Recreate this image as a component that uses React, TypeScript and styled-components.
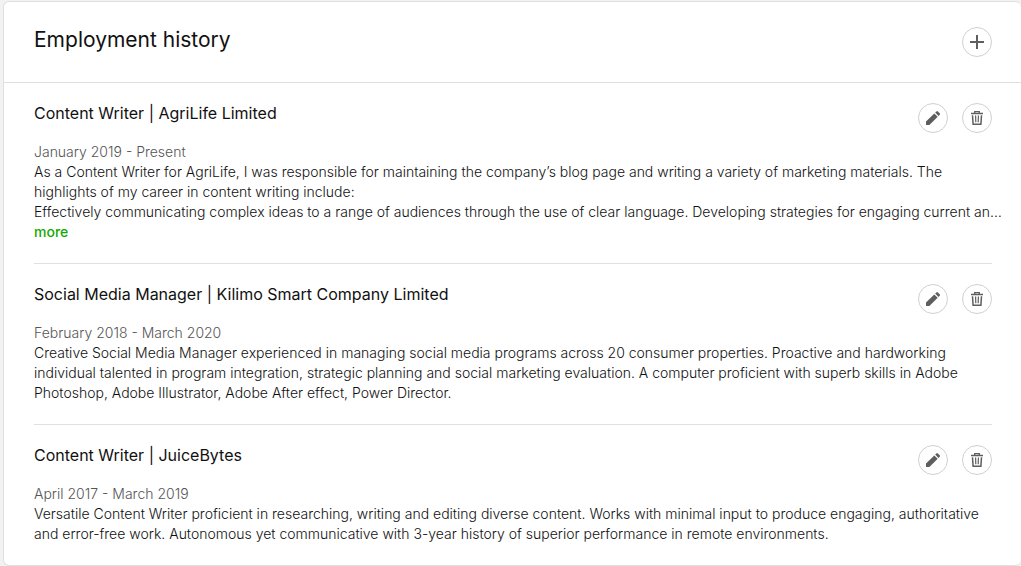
import React from 'react';
import styled, { createGlobalStyle } from 'styled-components';

const GlobalStyle = createGlobalStyle`
  * {
    box-sizing: border-box;
  }
  body {
    margin: 0;
    background: #f2f2f2;
    color: #111;
    font-family: Inter, 'Liberation Sans', sans-serif;
    font-size: 14px;
    font-weight: 300;
    line-height: 20px;
  }
`;

const Page = styled.main`
  padding: 1px 0 0 3px;
`;

const Card = styled.section`
  background: #fff;
  border: 1px solid #e0e0e0;
  border-right-width: 0;
  border-radius: 6px;
`;

const CardHeader = styled.header`
  display: flex;
  align-items: flex-start;
  justify-content: space-between;
  padding: 25px 29px 25px 30px;
  border-bottom: 1px solid #e0e0e0;
`;

const Heading = styled.h2`
  margin: 0;
  font-size: 21px;
  font-weight: 400;
  line-height: 26px;
`;

const JobList = styled.ul`
  list-style: none;
  margin: 0;
  padding: 0 29px 0 30px;
`;

const Job = styled.li`
  padding: 20px 0 21px;

  & + & {
    border-top: 1px solid #e0e0e0;
  }
`;

const JobHeader = styled.div`
  display: flex;
  align-items: flex-start;
  justify-content: space-between;
  margin-bottom: 9px;
`;

const JobTitle = styled.h3`
  margin: 0;
  font-size: 16px;
  font-weight: 400;
  line-height: 20px;
`;

const Actions = styled.div`
  display: flex;
  gap: 14px;
`;

const CircleButton = styled.button`
  display: flex;
  align-items: center;
  justify-content: center;
  width: 30px;
  height: 30px;
  padding: 0;
  background: #fff;
  border: 1px solid #d0d0d0;
  border-radius: 50%;
  color: #5e5e5e;
  cursor: pointer;
`;

const Dates = styled.p`
  margin: 0;
  color: #555;
`;

const Description = styled.p`
  margin: 0;
`;

const ClippedLine = styled(Description)`
  white-space: nowrap;
`;

const MoreLink = styled.a`
  display: inline-block;
  color: #14a800;
  font-weight: 500;
  text-decoration: none;
  vertical-align: top;
`;

const PlusIcon = () => (
  <svg width="14" height="14" viewBox="0 0 14 14" fill="currentColor" aria-hidden="true">
    <path d="M6 0h2v6h6v2H8v6H6V8H0V6h6z" />
  </svg>
);

const PencilIcon = () => (
  <svg width="14" height="14" viewBox="0 0 14 14" fill="currentColor" aria-hidden="true">
    <path d="M0 14v-3.4l8.3-8.2 3.4 3.4L3.4 14z" />
    <path d="M9.2 1.6 10.4.4a1 1 0 0 1 1.4 0l1.9 1.9a1 1 0 0 1 0 1.4l-1.2 1.2z" />
  </svg>
);

const TrashIcon = () => (
  <svg width="14" height="14" viewBox="0 0 14 14" fill="none" stroke="currentColor" aria-hidden="true">
    <path d="M4.7 2V.7h4.6V2" strokeWidth="1.3" />
    <path d="M1 2.5h12" strokeWidth="1.5" />
    <path d="M2.5 4.2l.6 9h7.8l.6-9" strokeWidth="1.5" />
    <path d="M5.6 4.6l.2 6.6M8.4 4.6l-.2 6.6" strokeWidth="1.2" />
  </svg>
);

interface JobData {
  title: string;
  dates: string;
  text: string;
  clipped?: string;
}

const jobs: JobData[] = [
  {
    title: 'Content Writer | AgriLife Limited',
    dates: 'January 2019 - Present',
    text: 'As a Content Writer for AgriLife, I was responsible for maintaining the company’s blog page and writing a variety of marketing materials. The highlights of my career in content writing include:',
    clipped:
      'Effectively communicating complex ideas to a range of audiences through the use of clear language. Developing strategies for engaging current an…',
  },
  {
    title: 'Social Media Manager | Kilimo Smart Company Limited',
    dates: 'February 2018 - March 2020',
    text: 'Creative Social Media Manager experienced in managing social media programs across 20 consumer properties. Proactive and hardworking individual talented in program integration, strategic planning and social marketing evaluation. A computer proficient with superb skills in Adobe Photoshop, Adobe Illustrator, Adobe After effect, Power Director.',
  },
  {
    title: 'Content Writer | JuiceBytes',
    dates: 'April 2017 - March 2019',
    text: 'Versatile Content Writer proficient in researching, writing and editing diverse content. Works with minimal input to produce engaging, authoritative and error-free work. Autonomous yet communicative with 3-year history of superior performance in remote environments.',
  },
];

export default function App() {
  return (
    <Page>
      <GlobalStyle />
      <Card>
        <CardHeader>
          <Heading>Employment history</Heading>
          <CircleButton type="button" aria-label="Add employment">
            <PlusIcon />
          </CircleButton>
        </CardHeader>
        <JobList>
          {jobs.map(job => (
            <Job key={job.title}>
              <JobHeader>
                <JobTitle>{job.title}</JobTitle>
                <Actions>
                  <CircleButton type="button" aria-label={`Edit ${job.title}`}>
                    <PencilIcon />
                  </CircleButton>
                  <CircleButton type="button" aria-label={`Delete ${job.title}`}>
                    <TrashIcon />
                  </CircleButton>
                </Actions>
              </JobHeader>
              <Dates>{job.dates}</Dates>
              <Description>{job.text}</Description>
              {job.clipped && (
                <>
                  <ClippedLine>{job.clipped}</ClippedLine>
                  <MoreLink href="#more">more</MoreLink>
                </>
              )}
            </Job>
          ))}
        </JobList>
      </Card>
    </Page>
  );
}
